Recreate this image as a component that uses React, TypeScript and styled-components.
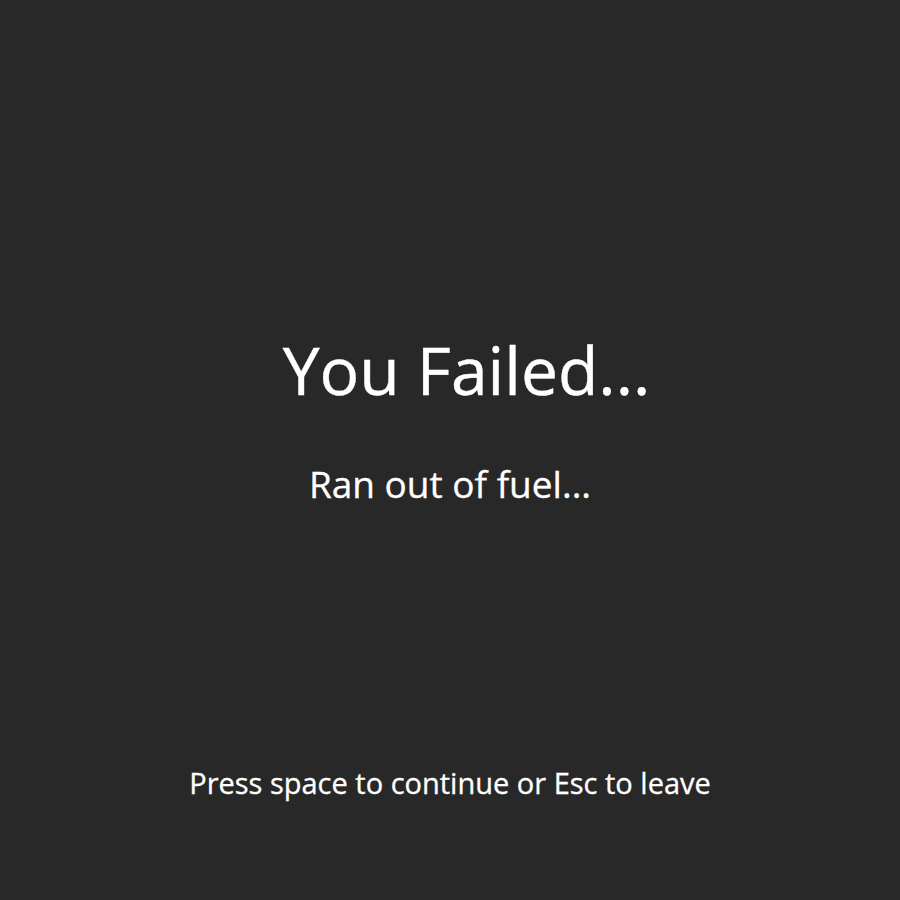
import React from "react";
import styled, { createGlobalStyle } from "styled-components";

const Global = createGlobalStyle`
  html, body { margin: 0; padding: 0; background: #282828; }
  body { font-family: "Open Sans", "Noto Sans", sans-serif; color: #ffffff; }
`;

const Screen = styled.div`
  width: 900px;
  height: 900px;
  display: flex;
  flex-direction: column;
  align-items: center;
  box-sizing: border-box;
  padding-top: 336px;
`;

const Title = styled.h1`
  margin: 0;
  font-size: 66px;
  font-weight: 400;
  line-height: 66px;
  padding-left: 33px;
  -webkit-text-stroke: 0.4px #ffffff;
`;

const Subtitle = styled.h2`
  margin: 63px 0 0;
  font-size: 37px;
  font-weight: 400;
  line-height: 37px;
  -webkit-text-stroke: 0.3px #ffffff;
`;

const Spacer = styled.div`
  flex: 1;
`;

const Hint = styled.p`
  margin: 0 0 103px;
  font-size: 29px;
  font-weight: 400;
  line-height: 29px;
  -webkit-text-stroke: 0.3px #ffffff;
`;

export default function App() {
  return (
    <>
      <Global />
      <Screen>
        <Title>You Failed...</Title>
        <Subtitle>Ran out of fuel...</Subtitle>
        <Spacer />
        <Hint>Press space to continue or Esc to leave</Hint>
      </Screen>
    </>
  );
}
